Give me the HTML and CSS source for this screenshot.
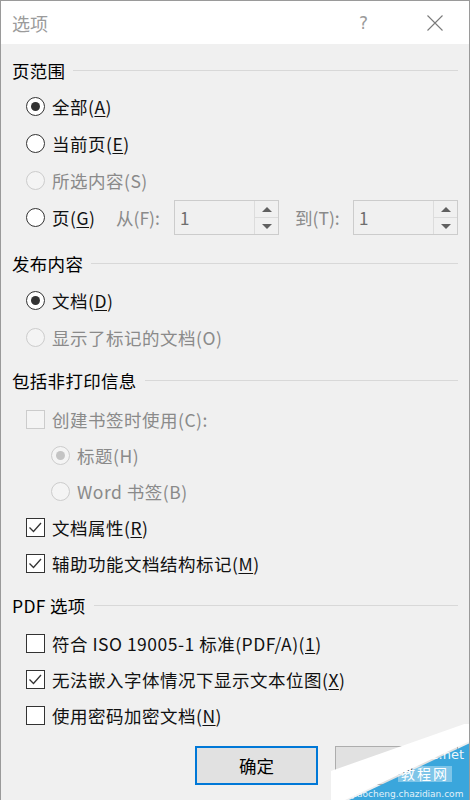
FILE: index.html
```html
<!DOCTYPE html>
<html lang="zh-CN">
<head>
    <meta charset="UTF-8">
    <meta name="viewport" content="width=device-width, initial-scale=1.0">
    <title>选项</title>
    <link rel="stylesheet" href="styles.css">
</head>
<body>
    <div class="dialog">
        <!-- Title bar -->
        <div class="titlebar">
            <span class="title">选项</span>
            <span class="help">?</span>
            <svg class="close" width="16" height="16" viewBox="0 0 16 16">
                <path d="M0.5 0.5 L15.5 15.5 M15.5 0.5 L0.5 15.5" stroke="#7a7a7a" stroke-width="1.1" fill="none"/>
            </svg>
        </div>

        <div class="content">
            <!-- Page range -->
            <div class="group-head first"><span>页范围</span></div>
            <div class="options rows37 top6">
                <div class="opt"><span class="radio on"></span>全部(<u>A</u>)</div>
                <div class="opt"><span class="radio"></span>当前页(<u>E</u>)</div>
                <div class="opt disabled"><span class="radio"></span>所选内容(S)</div>
                <div class="opt">
                    <span class="radio"></span><span class="page-label">页(<u>G</u>)</span>
                    <span class="field-label">从(F):</span>
                    <span class="spin">
                        <span class="spin-val">1</span>
                        <span class="spin-btns"><span class="arrow up"></span><span class="arrow down"></span></span>
                    </span>
                    <span class="field-label to">到(T):</span>
                    <span class="spin">
                        <span class="spin-val">1</span>
                        <span class="spin-btns"><span class="arrow up"></span><span class="arrow down"></span></span>
                    </span>
                </div>
            </div>

            <!-- Publish what -->
            <div class="group-head m15"><span>发布内容</span></div>
            <div class="options rows37 top7">
                <div class="opt"><span class="radio on"></span>文档(<u>D</u>)</div>
                <div class="opt disabled"><span class="radio"></span>显示了标记的文档(O)</div>
            </div>

            <!-- Non-printing info -->
            <div class="group-head m12"><span>包括非打印信息</span></div>
            <div class="options rows36 top9">
                <div class="opt disabled"><span class="check"></span>创建书签时使用(C):</div>
                <div class="opt sub disabled"><span class="radio on"></span>标题(H)</div>
                <div class="opt sub disabled"><span class="radio"></span>Word 书签(B)</div>
                <div class="opt"><span class="check on"><svg width="19" height="19" viewBox="0 0 19 19"><polyline points="3.5,9.5 7.5,13.5 15,5" fill="none" stroke="#333" stroke-width="1.3"/></svg></span>文档属性(<u>R</u>)</div>
                <div class="opt"><span class="check on"><svg width="19" height="19" viewBox="0 0 19 19"><polyline points="3.5,9.5 7.5,13.5 15,5" fill="none" stroke="#333" stroke-width="1.3"/></svg></span>辅助功能文档结构标记(<u>M</u>)</div>
            </div>

            <!-- PDF options -->
            <div class="group-head m12"><span>PDF 选项</span></div>
            <div class="options rows36 top8">
                <div class="opt"><span class="check"></span>符合 ISO 19005-1 标准(PDF/A)(<u>1</u>)</div>
                <div class="opt"><span class="check on"><svg width="19" height="19" viewBox="0 0 19 19"><polyline points="3.5,9.5 7.5,13.5 15,5" fill="none" stroke="#333" stroke-width="1.3"/></svg></span>无法嵌入字体情况下显示文本位图(<u>X</u>)</div>
                <div class="opt"><span class="check"></span>使用密码加密文档(<u>N</u>)</div>
            </div>

            <div class="buttons">
                <button class="btn primary">确定</button>
                <button class="btn">取消</button>
            </div>
        </div>

        <!-- site watermark in the corner -->
        <div class="watermark">
            <svg width="140" height="76" viewBox="330 724 140 76">
                <polygon points="331,771 470,722 470,741 345,800 331,800" fill="#ffffff"/>
                <polygon points="349,800 470,743 470,800" fill="#3aa6dc"/>
            </svg>
            <span class="wm-site">jb51.net</span>
            <span class="wm-name">教程网</span>
            <span class="wm-url">jiaocheng.chazidian.com</span>
        </div>
    </div>
</body>
</html>
```

FILE: styles.css
```css
* {
    box-sizing: border-box;
}

body {
    margin: 0;
    padding: 0;
    background-color: #f0f0f0;
    font-family: "Noto Sans CJK SC", "Noto Sans", sans-serif;
    color: #1a1a1a;
}

.dialog {
    position: relative;
    width: 470px;
    height: 800px;
    overflow: hidden;
    background-color: #f0f0f0;
    border: 1px solid #9a9a9a;
    border-bottom: none;
}

/* Title bar */
.titlebar {
    height: 43px;
    background-color: #ffffff;
    display: flex;
    align-items: center;
    padding-left: 11px;
}

.title {
    flex: 1;
    font-size: 18px;
    color: #9b9b9b;
}

.help {
    font-family: "DejaVu Sans", sans-serif;
    font-size: 17px;
    color: #9b9b9b;
    margin-right: 59px;
}

.close {
    margin-right: 26px;
}

/* Content */
.content {
    padding: 0 11px;
}

.group-head {
    display: flex;
    align-items: center;
    height: 24px;
    font-size: 17.5px;
    letter-spacing: 0.3px;
    color: #000;
}

.group-head::after {
    content: '';
    flex: 1;
    height: 1px;
    margin-left: 8px;
    background-color: #d8d8d8;
}

.group-head.first { margin-top: 14px; }
.group-head.m15 { margin-top: 15px; }
.group-head.m12 { margin-top: 12px; }

.top6 { margin-top: 6px; }
.top7 { margin-top: 7px; }
.top8 { margin-top: 8px; }
.top9 { margin-top: 9px; }

.options {
    padding-left: 14px;
}

.opt {
    display: flex;
    align-items: center;
    font-size: 17.5px;
    letter-spacing: 0.5px;
    color: #111;
}

.rows37 .opt { height: 37px; }
.rows36 .opt { height: 36px; }

.opt.sub {
    padding-left: 25px;
}

.opt.disabled {
    color: #8a8a8a;
}

u {
    text-underline-offset: 2px;
}

/* Radio buttons */
.radio {
    width: 19px;
    height: 19px;
    border-radius: 50%;
    border: 1px solid #333;
    background-color: #fff;
    margin-right: 7px;
    flex: none;
    display: flex;
    align-items: center;
    justify-content: center;
}

.radio.on::after {
    content: '';
    width: 9px;
    height: 9px;
    border-radius: 50%;
    background-color: #333;
}

.disabled .radio {
    border-color: #cccccc;
    background-color: #f4f4f4;
}

.disabled .radio.on::after {
    background-color: #c4c4c4;
}

/* Checkboxes */
.check {
    width: 19px;
    height: 19px;
    border: 1px solid #333;
    background-color: #fff;
    margin-right: 7px;
    flex: none;
    position: relative;
}

.check svg {
    position: absolute;
    top: -1px;
    left: -1px;
}

.disabled .check {
    border-color: #cccccc;
    background-color: #f4f4f4;
}

/* Page from/to row */
.page-label {
    width: 64px;
}

.field-label {
    width: 58px;
    color: #8a8a8a;
    letter-spacing: 0;
}

.field-label.to {
    margin-left: 16px;
}

.spin {
    width: 105px;
    height: 35px;
    border: 1px solid #cccccc;
    background-color: #f0f0f0;
    display: flex;
    align-items: stretch;
}

.spin-val {
    flex: 1;
    padding-left: 5px;
    display: flex;
    align-items: center;
    font-size: 17px;
    color: #6e6e6e;
}

.spin-btns {
    width: 24px;
    display: flex;
    flex-direction: column;
    border-left: 1px solid #dcdcdc;
}

.arrow {
    flex: 1;
    display: flex;
    align-items: center;
    justify-content: center;
}

.arrow.up {
    border-bottom: 1px solid #dcdcdc;
}

.arrow.up::after {
    content: '';
    border-left: 5px solid transparent;
    border-right: 5px solid transparent;
    border-bottom: 5px solid #606060;
}

.arrow.down::after {
    content: '';
    border-left: 5px solid transparent;
    border-right: 5px solid transparent;
    border-top: 5px solid #606060;
}

/* Buttons */
.buttons {
    margin-top: 13px;
    display: flex;
    justify-content: flex-end;
    gap: 17px;
}

.btn {
    width: 123px;
    height: 39px;
    font-family: inherit;
    font-size: 17.5px;
    color: #000;
    background-color: #e1e1e1;
    border: 1px solid #adadad;
    padding: 0;
}

.btn.primary {
    border: 2px solid #0078d7;
}

/* Watermark overlay */
.watermark {
    position: absolute;
    right: -1px;
    bottom: 0;
    width: 140px;
    height: 76px;
    font-family: "DejaVu Sans", "Noto Sans CJK SC", sans-serif;
    color: #ffffff;
    line-height: 1;
}

.watermark svg {
    position: absolute;
    left: 0;
    top: 0;
}

.wm-site {
    position: absolute;
    right: 6px;
    top: 24px;
    font-size: 13px;
    opacity: 0.9;
}

.wm-name {
    position: absolute;
    right: 18px;
    top: 42px;
    padding: 1px 3px;
    font-size: 14px;
    letter-spacing: 2px;
    background-color: rgba(255, 255, 255, 0.35);
}

.wm-url {
    position: absolute;
    left: 22px;
    bottom: 1px;
    font-size: 9px;
    white-space: nowrap;
    opacity: 0.85;
}
```
